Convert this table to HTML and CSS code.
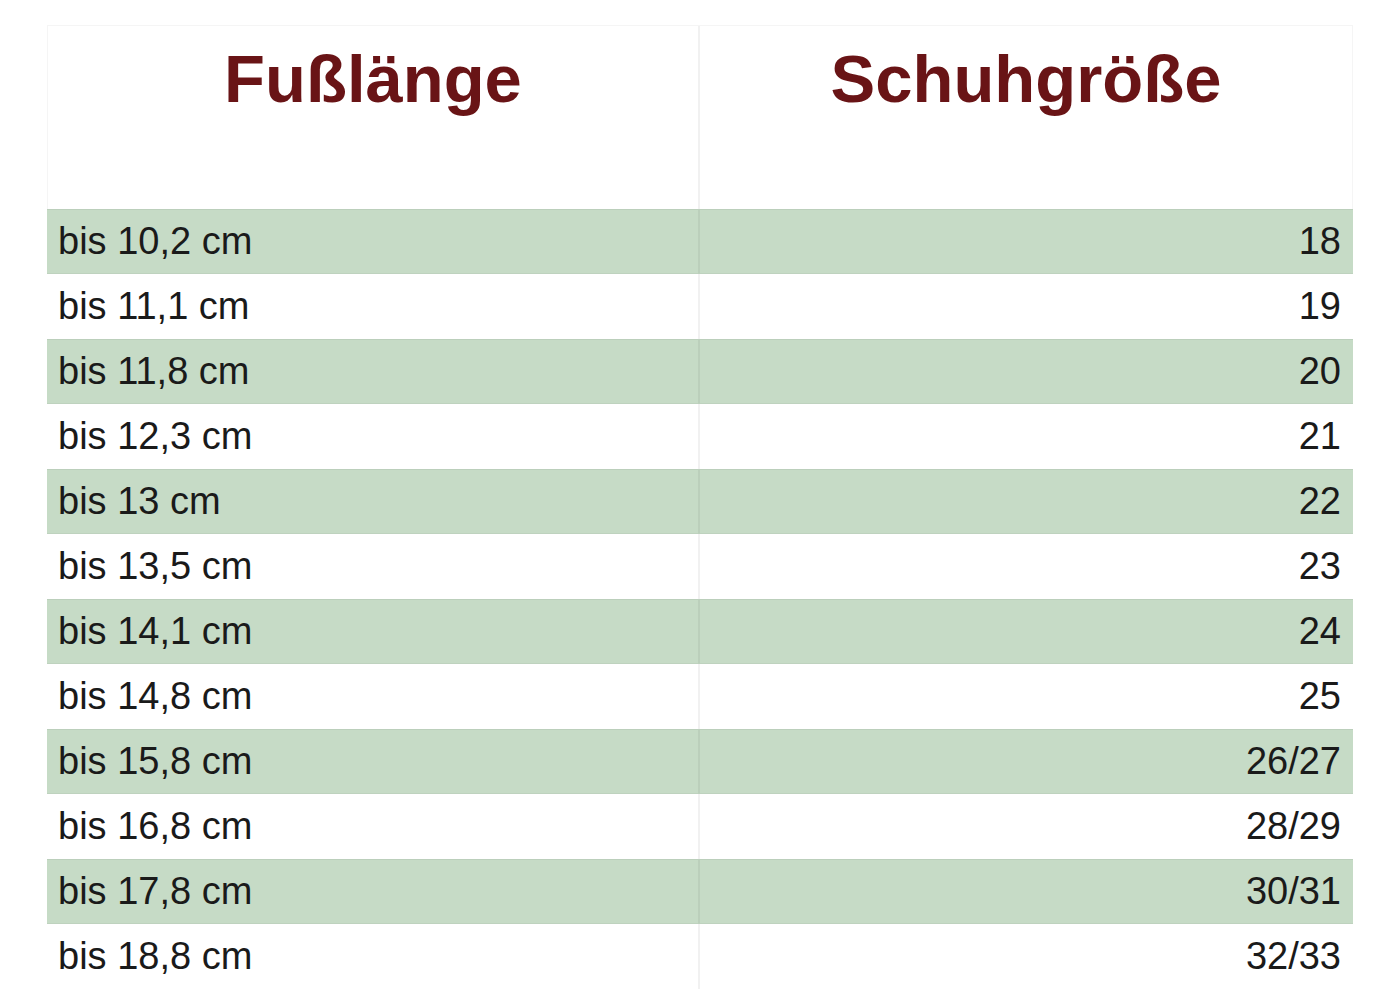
FILE: index.html
```html
<!DOCTYPE html>
<html lang="de">
<head>
<meta charset="utf-8">
<title>Größentabelle</title>
<link rel="stylesheet" href="styles.css">
</head>
<body>
<div class="size-table">
  <div class="cell head left">Fußlänge</div>
  <div class="cell head right">Schuhgröße</div>

  <div class="cell len alt">bis 10,2 cm</div><div class="cell size alt">18</div>
  <div class="cell len">bis 11,1 cm</div><div class="cell size">19</div>
  <div class="cell len alt">bis 11,8 cm</div><div class="cell size alt">20</div>
  <div class="cell len">bis 12,3 cm</div><div class="cell size">21</div>
  <div class="cell len alt">bis 13 cm</div><div class="cell size alt">22</div>
  <div class="cell len">bis 13,5 cm</div><div class="cell size">23</div>
  <div class="cell len alt">bis 14,1 cm</div><div class="cell size alt">24</div>
  <div class="cell len">bis 14,8 cm</div><div class="cell size">25</div>
  <div class="cell len alt">bis 15,8 cm</div><div class="cell size alt">26/27</div>
  <div class="cell len">bis 16,8 cm</div><div class="cell size">28/29</div>
  <div class="cell len alt">bis 17,8 cm</div><div class="cell size alt">30/31</div>
  <div class="cell len">bis 18,8 cm</div><div class="cell size">32/33</div>
</div>
</body>
</html>
```

FILE: styles.css
```css
html, body {
  margin: 0;
  padding: 0;
  background: #ffffff;
}

body {
  font-family: "Liberation Sans", Arial, sans-serif;
  color: #1a1a1a;
}

.size-table {
  display: grid;
  grid-template-columns: 653px 653px;
  grid-template-rows: 183px repeat(12, 65px);
  width: 1306px;
  margin: 25px 0 0 47px;
  border-top: 1px solid #f5f5f5;
}

.cell {
  box-sizing: border-box;
}

.head {
  font-weight: bold;
  font-size: 67px;
  color: #691416;
  text-align: center;
  padding-top: 14px;
  line-height: normal;
}

.head.left,
.len {
  border-right: 2px solid rgba(0, 0, 0, 0.055);
}

.head.left {
  border-left: 1px solid #f5f5f5;
}

.head.right {
  border-right: 1px solid #f5f5f5;
}

.len,
.size {
  font-size: 38px;
  line-height: 65px;
  white-space: nowrap;
}

.len {
  padding-left: 11px;
}

.size {
  text-align: right;
  padding-right: 12px;
}

.alt {
  background: #c6dbc6;
  box-shadow: inset 0 1px 0 rgba(0, 0, 0, 0.05), inset 0 -1px 0 rgba(0, 0, 0, 0.04);
}
```
